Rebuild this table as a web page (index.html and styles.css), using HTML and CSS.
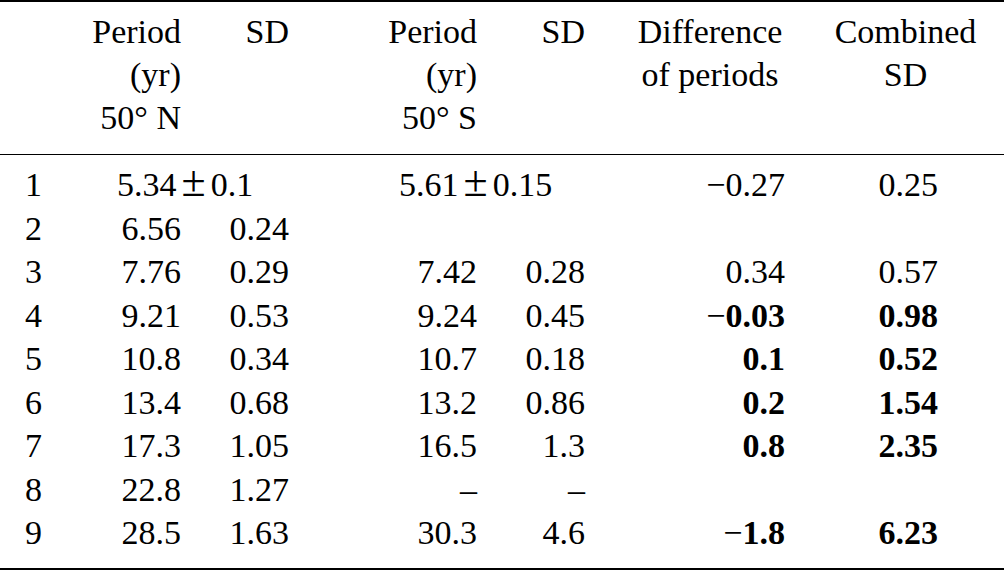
FILE: index.html
```html
<!DOCTYPE html>
<html>
<head>
<meta charset="utf-8">
<link rel="stylesheet" href="styles.css">
</head>
<body>
<table class="tbl">
  <colgroup>
    <col class="c-lab"><col class="c-p1"><col class="c-sd1"><col class="c-p2"><col class="c-sd2"><col class="c-diff"><col class="c-comb">
  </colgroup>
  <thead>
    <tr>
      <th class="lab"></th>
      <th class="num">Period<br>(yr)<br>50° N</th>
      <th class="num">SD</th>
      <th class="num">Period<br>(yr)<br>50° S</th>
      <th class="num">SD</th>
      <th class="diff-h">Difference<br>of periods</th>
      <th class="comb-h">Combined<br>SD</th>
    </tr>
  </thead>
  <tbody>
    <tr>
      <td class="lab">1</td>
      <td class="pm pm-n" colspan="2">5.34<span class="op">±</span>0.1</td>
      <td class="pm pm-s" colspan="2">5.61<span class="op">±</span>0.15</td>
      <td class="diff">−0.27</td>
      <td class="comb">0.25</td>
    </tr>
    <tr>
      <td class="lab">2</td><td class="num">6.56</td><td class="num">0.24</td>
      <td class="num"></td><td class="num"></td><td class="diff"></td><td class="comb"></td>
    </tr>
    <tr>
      <td class="lab">3</td><td class="num">7.76</td><td class="num">0.29</td>
      <td class="num">7.42</td><td class="num">0.28</td><td class="diff">0.34</td><td class="comb">0.57</td>
    </tr>
    <tr>
      <td class="lab">4</td><td class="num">9.21</td><td class="num">0.53</td>
      <td class="num">9.24</td><td class="num">0.45</td><td class="diff">−<b>0.03</b></td><td class="comb"><b>0.98</b></td>
    </tr>
    <tr>
      <td class="lab">5</td><td class="num">10.8</td><td class="num">0.34</td>
      <td class="num">10.7</td><td class="num">0.18</td><td class="diff"><b>0.1</b></td><td class="comb"><b>0.52</b></td>
    </tr>
    <tr>
      <td class="lab">6</td><td class="num">13.4</td><td class="num">0.68</td>
      <td class="num">13.2</td><td class="num">0.86</td><td class="diff"><b>0.2</b></td><td class="comb"><b>1.54</b></td>
    </tr>
    <tr>
      <td class="lab">7</td><td class="num">17.3</td><td class="num">1.05</td>
      <td class="num">16.5</td><td class="num">1.3</td><td class="diff"><b>0.8</b></td><td class="comb"><b>2.35</b></td>
    </tr>
    <tr>
      <td class="lab">8</td><td class="num">22.8</td><td class="num">1.27</td>
      <td class="num">–</td><td class="num">–</td><td class="diff"></td><td class="comb"></td>
    </tr>
    <tr>
      <td class="lab">9</td><td class="num">28.5</td><td class="num">1.63</td>
      <td class="num">30.3</td><td class="num">4.6</td><td class="diff">−<b>1.8</b></td><td class="comb"><b>6.23</b></td>
    </tr>
  </tbody>
</table>
</body>
</html>
```

FILE: styles.css
```css
html, body {
  margin: 0;
  padding: 0;
  background: #ffffff;
}

body {
  font-family: "Liberation Serif", "Times New Roman", serif;
  font-size: 34px;
  color: #000000;
}

.tbl {
  width: 1004px;
  border-collapse: collapse;
  table-layout: fixed;
  border-top: 2px solid #000000;
  border-bottom: 2px solid #000000;
}

.c-lab { width: 60px; }
.c-p1 { width: 121px; }
.c-sd1 { width: 108px; }
.c-p2 { width: 188px; }
.c-sd2 { width: 108px; }
.c-diff { width: 200px; }
.c-comb { width: 219px; }

th, td {
  padding: 0;
  font-weight: normal;
  white-space: nowrap;
  vertical-align: top;
}

thead th {
  line-height: 43px;
  padding-top: 8px;
  padding-bottom: 15px;
  border-bottom: 1.5px solid #000000;
}

tbody td {
  line-height: 43.5px;
}

tbody tr:first-child td {
  padding-top: 8px;
}

tbody tr:last-child td {
  padding-bottom: 13px;
}

.lab {
  text-align: left;
  padding-left: 25px;
}

.num {
  text-align: right;
}

.diff-h {
  text-align: center;
  padding-left: 50px;
}

.comb-h {
  text-align: center;
  padding-left: 48px;
  padding-right: 26px;
}

.diff {
  text-align: right;
}

.comb {
  text-align: right;
  padding-right: 66px;
}

.pm {
  text-align: left;
}

.pm-n {
  padding-left: 57px;
}

.pm-s {
  padding-left: 110px;
}

.op {
  font-size: 44px;
  line-height: 0;
  margin: 0 5px;
}

b {
  font-weight: bold;
}
```
